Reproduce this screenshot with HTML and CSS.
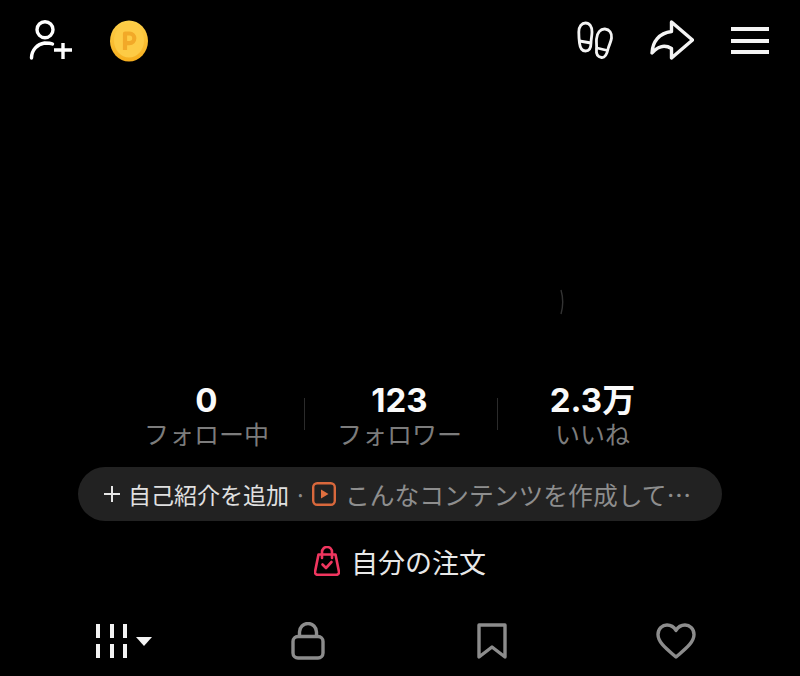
FILE: index.html
```html
<!DOCTYPE html>
<html lang="ja">
<head>
    <meta charset="UTF-8">
    <meta name="viewport" content="width=device-width, initial-scale=1.0">
    <title>プロフィール</title>
    <link rel="stylesheet" href="styles.css">
</head>
<body>
    <div class="profile">
        <header class="topbar">
            <div class="topbar-group">
                <svg class="icon-person" width="44" height="42" viewBox="0 0 44 42" fill="none" stroke="#fff" stroke-width="3.400" stroke-linecap="round">
                    <circle cx="16" cy="9.700" r="8"/>
                    <path d="M2.500 38c0-8 6-14 13-15 3 0 6 0 8 1"/>
                    <path d="M25 30h18M34 23v16" stroke-linecap="butt"/>
                </svg>
                <svg class="icon-coin" width="38" height="42" viewBox="0 0 38 42">
                    <defs>
                        <linearGradient id="coinEdge" x1="0" y1="0" x2="0" y2="1">
                            <stop offset="0" stop-color="#fdd04a"/>
                            <stop offset="1" stop-color="#f6ae1e"/>
                        </linearGradient>
                    </defs>
                    <ellipse cx="19" cy="21" rx="19" ry="20.500" fill="url(#coinEdge)"/>
                    <ellipse cx="19" cy="20.500" rx="15" ry="17" fill="#fdcb45"/>
                    <path d="M15 30V13.500h4.500a4.800 4.800 0 0 1 0 9.600H15" fill="none" stroke="#f2a928" stroke-width="4.200" stroke-linejoin="round"/>
                </svg>
            </div>
            <div class="topbar-group right">
                <svg class="icon-feet" width="37" height="40" viewBox="0 0 37 40" fill="none" stroke="#f4f4f4" stroke-width="2.800" stroke-linejoin="round">
                    <path d="M8.500 2c4 0 6.500 3.500 6.500 9 0 4-1 7-1 11 0 4-1.500 8-5.500 8s-5.500-3.500-6-8C2 18 1.800 15 1.800 11c0-5.500 3-9 6.700-9z"/>
                    <path d="M2.500 20l11.500 2"/>
                    <path d="M28 8c4.500.3 7 4 6.500 9-.4 4-2.500 7-3.500 11-1 5-2.500 9-6.500 8.500-4-.5-5.500-4-5-8.500.4-3.500-.3-6 0-10C19.800 12 23.500 7.700 28 8z"/>
                    <path d="M20 27l10.500 2.500"/>
                </svg>
                <svg class="icon-share" width="44" height="40" viewBox="0 0 44 40" fill="none" stroke="#f4f4f4" stroke-width="3.400" stroke-linejoin="round">
                    <path d="M21.500 2 42.500 20 21.500 38V28.500C14 24 7 27 2 33 2.500 22 9 13 21.500 11.500z"/>
                </svg>
                <div class="menu"><span></span><span></span><span></span></div>
            </div>
        </header>

        <div class="hero">
            <svg class="hero-mark" width="4" height="26" viewBox="0 0 4 26" fill="none" stroke="#333" stroke-width="1.400"><path d="M1 1c2 7 2 17 0 24"/></svg>
        </div>

        <section class="stats">
            <div class="stat">
                <div class="stat-num">0</div>
                <div class="stat-label">フォロー中</div>
            </div>
            <div class="stat">
                <div class="stat-num">123</div>
                <div class="stat-label">フォロワー</div>
            </div>
            <div class="stat">
                <div class="stat-num">2.3万</div>
                <div class="stat-label">いいね</div>
            </div>
        </section>

        <div class="bio-pill">
            <svg width="16" height="16" viewBox="0 0 16 16" stroke="#e6e6e6" stroke-width="2"><path d="M0 8h16M8 0v16"/></svg>
            <span class="bio-add">自己紹介を追加</span>
            <span class="bio-dot">·</span>
            <svg width="24" height="24" viewBox="0 0 24 24" fill="none">
                <rect x="1.200" y="1.200" width="21.600" height="21.600" rx="4" stroke="#d9683c" stroke-width="2.400"/>
                <path d="M9 7.500v9l7.500-4.500z" fill="#e0703f"/>
            </svg>
            <span class="bio-hint">こんなコンテンツを作成して…</span>
        </div>

        <div class="orders">
            <svg width="26" height="30" viewBox="0 0 26 30" fill="none" stroke="#f0365f" stroke-width="2.600" stroke-linejoin="round" stroke-linecap="round">
                <path d="M4.500 8.500h17L25 26a2.500 2.500 0 0 1-2.500 2.800h-19A2.500 2.500 0 0 1 1 26z"/>
                <path d="M8 12V6a5 5 0 0 1 10 0v6"/>
                <path d="M8.500 18.500l3.500 3.500 5.500-6"/>
            </svg>
            <span>自分の注文</span>
        </div>

        <nav class="tabs">
            <div class="tab">
                <div class="grid-icon">
                    <i></i><i></i><i></i><i></i><i></i><i></i>
                </div>
                <span class="caret"></span>
            </div>
            <div class="tab">
                <svg width="34" height="38" viewBox="0 0 34 38" fill="none" stroke="#8c8c8c" stroke-width="3.400">
                    <rect x="2" y="14.500" width="30" height="21.500" rx="5"/>
                    <path d="M8.500 14.500V10a8.500 8.500 0 0 1 17 0v4.500"/>
                </svg>
            </div>
            <div class="tab">
                <svg width="30" height="36" viewBox="0 0 30 36" fill="none" stroke="#8c8c8c" stroke-width="3.400" stroke-linejoin="round">
                    <path d="M2 2h26v32L15 24 2 34z"/>
                </svg>
            </div>
            <div class="tab">
                <svg width="40" height="36" viewBox="0 0 40 36" fill="none" stroke="#8c8c8c" stroke-width="3.400" stroke-linejoin="round">
                    <path d="M20 34C12 27 2 20 2 11.500 2 5.500 6.500 2 11 2c4 0 7 2 9 5.500C22 4 25 2 29 2c4.500 0 9 3.500 9 9.500C38 20 28 27 20 34z"/>
                </svg>
            </div>
        </nav>
    </div>
</body>
</html>
```

FILE: styles.css
```css
* { box-sizing: border-box; }
html, body { margin: 0; height: 100%; background: #000; }
body { font-family: "Noto Sans CJK JP", "Noto Sans", sans-serif; color: #fff; overflow: hidden; }
svg { display: block; flex-shrink: 0; }

.profile { width: 800px; height: 676px; display: flex; flex-direction: column; }

.topbar { height: 82px; padding: 20px 31px 0 29px; display: flex; justify-content: space-between; align-items: flex-start; }
.topbar-group { display: flex; align-items: flex-start; gap: 37px; }
.topbar-group.right { gap: 36px; }
.icon-feet { margin-top: 1px; }

.menu { width: 38px; height: 27px; margin: 7px 0 0 1px; display: flex; flex-direction: column; justify-content: space-between; }
.menu span { height: 4px; background: #f5f5f5; }

.hero { height: 302px; position: relative; }
.hero-mark { position: absolute; left: 560px; top: 207px; }

.stats { height: 83px; padding-left: 111px; display: flex; align-items: flex-start; }
.stat { width: 193px; height: 68px; text-align: center; position: relative; }
.stat + .stat::before { content: ""; position: absolute; left: 0; top: 14px; width: 1px; height: 32px; background: #2b2b2b; }
.stat-num { font-family: Inter, "Noto Sans CJK JP", sans-serif; font-weight: 700; font-size: 33px; line-height: 33px; margin-right: 2px; color: #fafafa; }
.stat-label { font-size: 25px; line-height: 32px; margin-right: 2px; color: #7c7c7c; }

.bio-pill { width: 644px; height: 54px; margin: 0 auto; padding: 0 26px; border-radius: 27px; background: #222; display: flex; align-items: center; gap: 8px; font-size: 23px; white-space: nowrap; }
.bio-add { color: #e0e0e0; }
.bio-dot { color: #8a8a8a; margin: 0 -3px; }
.bio-hint { color: #8e8e8e; font-size: 24.800px; margin-left: 1px; }

.orders { height: 80px; display: flex; align-items: center; justify-content: center; gap: 11px; font-size: 27px; color: #e8e8e8; }

.tabs { flex: 1; padding: 17px 32px 0; display: grid; grid-template-columns: repeat(4, 1fr); align-items: start; }
.tab { display: flex; justify-content: center; align-items: center; gap: 9px; height: 46px; }

.grid-icon { width: 31px; display: grid; grid-template-columns: repeat(3, 4px); justify-content: space-between; row-gap: 6px; }
.grid-icon i { height: 14px; background: #f2f2f2; }
.caret { width: 0; height: 0; border-left: 8px solid transparent; border-right: 8px solid transparent; border-top: 9px solid #f5f5f5; }
```
